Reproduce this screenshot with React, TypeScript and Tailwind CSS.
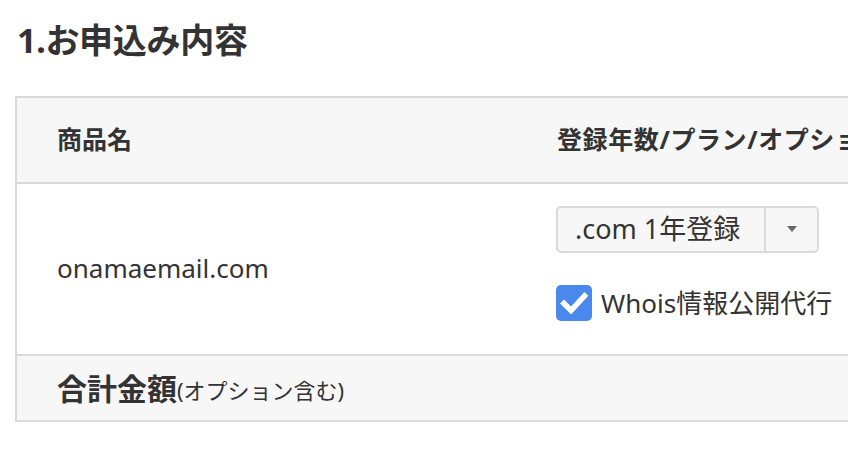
import React from 'react';

const jp = "font-['Noto_Sans','Noto_Sans_CJK_JP',sans-serif]";

const CheckIcon: React.FC = () => (
  <svg viewBox="0 0 36 36" className="w-[36px] h-[36px]">
    <rect x="0" y="0" width="36" height="36" rx="5" fill="#4a88ee" />
    <path d="M8 18.5 L15 25.5 L28.5 11" fill="none" stroke="#fff" strokeWidth="5.5" strokeLinecap="square" />
  </svg>
);

export default function App() {
  return (
    <div className={`${jp} text-[#333] bg-white w-[848px] h-[470px] overflow-hidden`}>
      <h1 className="pl-[17px] pt-[17px] text-[34px] font-bold leading-[46px] tracking-[-0.3px]">1.お申込み内容</h1>

      <div className="mt-[33px] ml-[15px] w-[1100px] border-2 border-[#d9d9d9]">
        <div className="flex h-[84px] items-center bg-[#f7f7f7] text-[25px] font-bold">
          <div className="w-[500px] pl-[40px]">商品名</div>
          <div className="whitespace-nowrap pl-[40px] tracking-[0.6px]">登録年数/プラン/オプション</div>
        </div>

        <div className="flex h-[172px] items-center border-t-2 border-[#d9d9d9] bg-white">
          <div className="w-[500px] pl-[40px] text-[26px] pb-[2px]">onamaemail.com</div>
          <div className="flex flex-col gap-[31px] pl-[39px] pb-[10px]">
            <div className="flex h-[47px] w-[263px] rounded-[5px] border-2 border-[#dadada] bg-[#f7f7f7]">
              <div className="flex flex-1 items-center pl-[17px] text-[27px]">.com 1年登録</div>
              <div className="flex w-[53px] items-center justify-center border-l-2 border-[#dadada]">
                <svg viewBox="0 0 10 6" className="w-[10px] h-[6px]">
                  <path d="M0 0 L10 0 L5 6 Z" fill="#666" />
                </svg>
              </div>
            </div>
            <label className="flex items-center gap-[9px] text-[26px]">
              <CheckIcon />
              <span>Whois情報公開代行</span>
            </label>
          </div>
        </div>

        <div className="flex h-[66px] items-center border-t-2 border-[#d9d9d9] bg-[#f7f7f7] pl-[40px]">
          <span className="text-[30px] font-bold">合計金額</span>
          <span className="text-[22px] mt-[4px]">(オプション含む)</span>
        </div>
      </div>
    </div>
  );
}
